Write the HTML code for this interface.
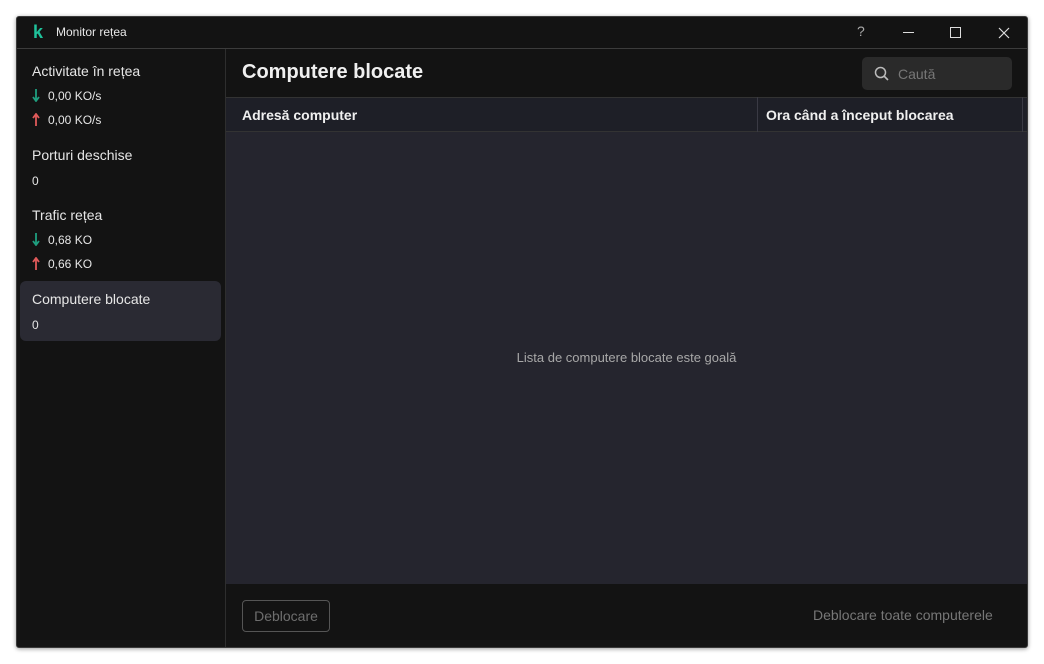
<!DOCTYPE html>
<html><head><meta charset="utf-8"><style>
*{margin:0;padding:0;box-sizing:border-box}
body{width:1044px;height:664px;background:#fff;font-family:"Liberation Sans",sans-serif;position:relative;overflow:hidden}
.win{position:absolute;left:16px;top:16px;width:1012px;height:632px;background:#131313;border:1px solid #3a3a3a;border-radius:3px;box-shadow:0 1px 4px rgba(0,0,0,.4);overflow:hidden}
.tb{position:absolute;left:0;top:0;width:100%;height:32px;border-bottom:1px solid #3c3c3c;color:#e8e8e8;font-size:12px}
.abs{position:absolute}
.side{position:absolute;left:0;top:32px;width:209px;bottom:0;border-right:1px solid #2e2e2e}
.st{position:absolute;left:15px;color:#e6e6e6;font-size:14px}
.sv{position:absolute;left:15px;color:#e6e6e6;font-size:12px}
.ar{display:inline-block;width:16px;vertical-align:-2px}
.main{position:absolute;left:209px;top:32px;right:0;bottom:0}
</style></head><body>
<div class="win">
 <div class="tb">
  <div class="abs" style="left:16px;top:5px;color:#1fc29b;font-weight:bold;font-size:18px;line-height:20px">k</div>
  <div class="abs" style="left:39px;top:8px">Monitor rețea</div>
  <div class="abs" style="left:840px;top:6px;color:#aaa;font-size:14px">?</div>
  <div class="abs" style="left:886px;top:15px;width:11px;height:1px;background:#ddd"></div>
  <div class="abs" style="left:933px;top:10px;width:11px;height:11px;border:1px solid #ddd"></div>
  <svg class="abs" style="left:981px;top:10px" width="12" height="12"><path d="M1 1L11 11M11 1L1 11" stroke="#ddd" stroke-width="1.2"/></svg>
 </div>
 <div class="side">
  <div class="st" style="top:14px">Activitate în rețea</div>
  <div class="sv" style="top:40px"><svg class="ar" width="16" height="13"><path d="M4 0V11M1 8L4 12L7 8" stroke="#1f9f7f" stroke-width="1.8" fill="none"/></svg>0,00 KO/s</div>
  <div class="sv" style="top:64px"><svg class="ar" width="16" height="13"><path d="M4 13V2M1 5L4 1L7 5" stroke="#e05a5a" stroke-width="1.8" fill="none"/></svg>0,00 KO/s</div>
  <div class="st" style="top:98px">Porturi deschise</div>
  <div class="sv" style="top:125px">0</div>
  <div class="st" style="top:158px">Trafic rețea</div>
  <div class="sv" style="top:184px"><svg class="ar" width="16" height="13"><path d="M4 0V11M1 8L4 12L7 8" stroke="#1f9f7f" stroke-width="1.8" fill="none"/></svg>0,68 KO</div>
  <div class="sv" style="top:208px"><svg class="ar" width="16" height="13"><path d="M4 13V2M1 5L4 1L7 5" stroke="#e05a5a" stroke-width="1.8" fill="none"/></svg>0,66 KO</div>
  <div class="abs" style="left:3px;top:232px;width:201px;height:60px;background:#2a2a33;border-radius:6px"></div>
  <div class="st" style="top:242px">Computere blocate</div>
  <div class="sv" style="top:269px">0</div>
 </div>
 <div class="main">
  <div class="abs" style="left:16px;top:12px;color:#f0f0f0;font-size:20px;font-weight:bold">Computere blocate</div>
  <div class="abs" style="left:636px;top:8px;width:150px;height:33px;background:#2a2a2a;border-radius:5px"></div>
  <svg class="abs" style="left:648px;top:17px" width="16" height="16"><circle cx="6.5" cy="6.5" r="5" stroke="#bbb" stroke-width="1.5" fill="none"/><path d="M10 10L14 14" stroke="#bbb" stroke-width="1.6"/></svg>
  <div class="abs" style="left:672px;top:17px;color:#777;font-size:14px">Caută</div>
  <div class="abs" style="left:0;top:48px;right:0;height:35px;background:#1e1f27;border-top:1px solid #333;border-bottom:1px solid #333"></div>
  <div class="abs" style="left:531px;top:48px;width:1px;height:35px;background:#3a3a44"></div>
  <div class="abs" style="left:796px;top:48px;width:1px;height:35px;background:#3a3a44"></div>
  <div class="abs" style="left:16px;top:58px;color:#f0f0f0;font-size:14px;font-weight:bold">Adresă computer</div>
  <div class="abs" style="left:540px;top:58px;color:#f0f0f0;font-size:14px;font-weight:bold">Ora când a început blocarea</div>
  <div class="abs" style="left:0;top:83px;right:0;height:452px;background:#25252e"></div>
  <div class="abs" style="left:0;right:0;top:301px;text-align:center;color:#a8a8a8;font-size:13px">Lista de computere blocate este goală</div>
  <div class="abs" style="left:16px;top:551px;width:88px;height:32px;border:1px solid #555;border-radius:4px;color:#6e6e6e;font-size:14px;text-align:center;line-height:30px">Deblocare</div>
  <div class="abs" style="left:587px;top:558px;color:#777;font-size:14px">Deblocare toate computerele</div>
 </div>
</div>
</body></html>
